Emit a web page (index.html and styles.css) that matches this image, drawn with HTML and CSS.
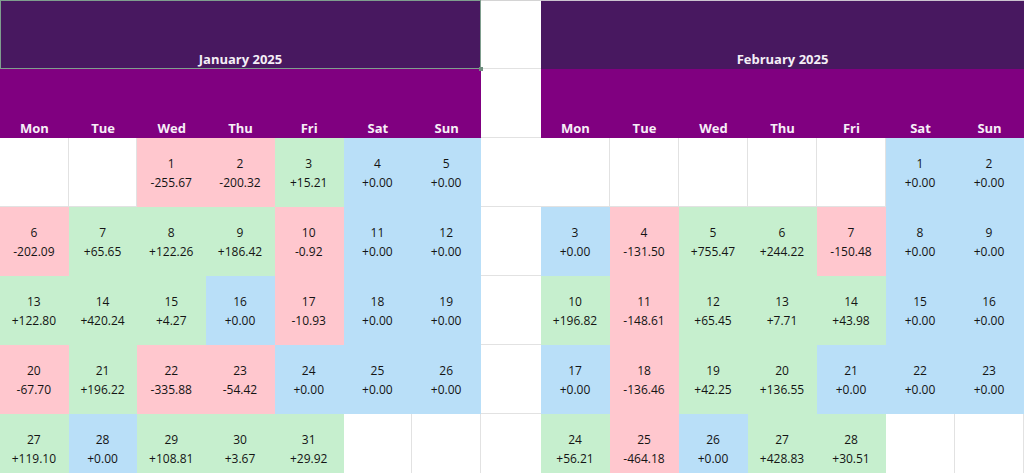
FILE: index.html
```html
<!DOCTYPE html>
<html lang="en">
<head>
<meta charset="utf-8">
<title>Calendar 2025</title>
<link rel="stylesheet" href="styles.css">
</head>
<body>
<div class="sheet">
  <section class="month month-jan">
    <div class="title selected">January 2025</div>
    <div class="dow">Mon</div><div class="dow">Tue</div><div class="dow">Wed</div><div class="dow">Thu</div><div class="dow">Fri</div><div class="dow">Sat</div><div class="dow">Sun</div>

    <div class="day"></div>
    <div class="day"></div>
    <div class="day loss"><span>1</span><span>-255.67</span></div>
    <div class="day loss"><span>2</span><span>-200.32</span></div>
    <div class="day gain"><span>3</span><span>+15.21</span></div>
    <div class="day flat"><span>4</span><span>+0.00</span></div>
    <div class="day flat"><span>5</span><span>+0.00</span></div>

    <div class="day loss"><span>6</span><span>-202.09</span></div>
    <div class="day gain"><span>7</span><span>+65.65</span></div>
    <div class="day gain"><span>8</span><span>+122.26</span></div>
    <div class="day gain"><span>9</span><span>+186.42</span></div>
    <div class="day loss"><span>10</span><span>-0.92</span></div>
    <div class="day flat"><span>11</span><span>+0.00</span></div>
    <div class="day flat"><span>12</span><span>+0.00</span></div>

    <div class="day gain"><span>13</span><span>+122.80</span></div>
    <div class="day gain"><span>14</span><span>+420.24</span></div>
    <div class="day gain"><span>15</span><span>+4.27</span></div>
    <div class="day flat"><span>16</span><span>+0.00</span></div>
    <div class="day loss"><span>17</span><span>-10.93</span></div>
    <div class="day flat"><span>18</span><span>+0.00</span></div>
    <div class="day flat"><span>19</span><span>+0.00</span></div>

    <div class="day loss"><span>20</span><span>-67.70</span></div>
    <div class="day gain"><span>21</span><span>+196.22</span></div>
    <div class="day loss"><span>22</span><span>-335.88</span></div>
    <div class="day loss"><span>23</span><span>-54.42</span></div>
    <div class="day flat"><span>24</span><span>+0.00</span></div>
    <div class="day flat"><span>25</span><span>+0.00</span></div>
    <div class="day flat"><span>26</span><span>+0.00</span></div>

    <div class="day gain"><span>27</span><span>+119.10</span></div>
    <div class="day flat"><span>28</span><span>+0.00</span></div>
    <div class="day gain"><span>29</span><span>+108.81</span></div>
    <div class="day gain"><span>30</span><span>+3.67</span></div>
    <div class="day gain"><span>31</span><span>+29.92</span></div>
    <div class="day"></div>
    <div class="day"></div>
  </section>

  <div class="spacer">
    <div class="blank"></div><div class="blank"></div><div class="blank"></div><div class="blank"></div><div class="blank"></div><div class="blank"></div><div class="blank"></div>
  </div>

  <section class="month month-feb">
    <div class="title">February 2025</div>
    <div class="dow">Mon</div><div class="dow">Tue</div><div class="dow">Wed</div><div class="dow">Thu</div><div class="dow">Fri</div><div class="dow">Sat</div><div class="dow">Sun</div>

    <div class="day"></div>
    <div class="day"></div>
    <div class="day"></div>
    <div class="day"></div>
    <div class="day"></div>
    <div class="day flat"><span>1</span><span>+0.00</span></div>
    <div class="day flat"><span>2</span><span>+0.00</span></div>

    <div class="day flat"><span>3</span><span>+0.00</span></div>
    <div class="day loss"><span>4</span><span>-131.50</span></div>
    <div class="day gain"><span>5</span><span>+755.47</span></div>
    <div class="day gain"><span>6</span><span>+244.22</span></div>
    <div class="day loss"><span>7</span><span>-150.48</span></div>
    <div class="day flat"><span>8</span><span>+0.00</span></div>
    <div class="day flat"><span>9</span><span>+0.00</span></div>

    <div class="day gain"><span>10</span><span>+196.82</span></div>
    <div class="day loss"><span>11</span><span>-148.61</span></div>
    <div class="day gain"><span>12</span><span>+65.45</span></div>
    <div class="day gain"><span>13</span><span>+7.71</span></div>
    <div class="day gain"><span>14</span><span>+43.98</span></div>
    <div class="day flat"><span>15</span><span>+0.00</span></div>
    <div class="day flat"><span>16</span><span>+0.00</span></div>

    <div class="day flat"><span>17</span><span>+0.00</span></div>
    <div class="day loss"><span>18</span><span>-136.46</span></div>
    <div class="day gain"><span>19</span><span>+42.25</span></div>
    <div class="day gain"><span>20</span><span>+136.55</span></div>
    <div class="day flat"><span>21</span><span>+0.00</span></div>
    <div class="day flat"><span>22</span><span>+0.00</span></div>
    <div class="day flat"><span>23</span><span>+0.00</span></div>

    <div class="day gain"><span>24</span><span>+56.21</span></div>
    <div class="day loss"><span>25</span><span>-464.18</span></div>
    <div class="day flat"><span>26</span><span>+0.00</span></div>
    <div class="day gain"><span>27</span><span>+428.83</span></div>
    <div class="day gain"><span>28</span><span>+30.51</span></div>
    <div class="day"></div>
    <div class="day"></div>
  </section>
</div>
</body>
</html>
```

FILE: styles.css
```css
* { box-sizing: border-box; }

html, body {
  margin: 0;
  padding: 0;
  background: #ffffff;
  overflow: hidden;
}

body {
  font-family: "Open Sans", "Noto Sans", sans-serif;
  font-size: 12px;
  color: #141414;
}

.sheet {
  display: flex;
  width: 1024px;
  height: 473px;
  overflow: hidden;
}

.month {
  display: grid;
  grid-template-columns: repeat(7, 1fr);
  grid-auto-rows: 69px;
  flex: none;
}

.month-jan { width: 481px; }
.month-feb { width: 483px; }

.spacer {
  width: 60px;
  flex: none;
  display: grid;
  grid-auto-rows: 69px;
}

.blank {
  border-bottom: 1px solid #e2e2e2;
}
.blank:first-child {
  box-shadow: inset 0 1px 0 #d4d4d4;
}

.title {
  grid-column: 1 / -1;
  background: #481860;
  color: #f4eff6;
  font-weight: 700;
  font-size: 13px;
  line-height: 13px;
  display: flex;
  align-items: flex-end;
  justify-content: center;
  padding-bottom: 3px;
  box-shadow: inset 0 1px 0 #cbc3cf;
}

.title.selected {
  position: relative;
  box-shadow: inset 0 0 0 1px #7f9e8e;
}

.title.selected::after {
  content: "";
  position: absolute;
  right: -2px;
  bottom: -2px;
  width: 4px;
  height: 4px;
  background: #6f8f7f;
}

.dow {
  background: #800080;
  color: #f7eef7;
  font-weight: 700;
  font-size: 13px;
  line-height: 13px;
  display: flex;
  align-items: flex-end;
  justify-content: center;
  padding-bottom: 3px;
}

.day {
  display: flex;
  flex-direction: column;
  align-items: center;
  justify-content: center;
  line-height: 19px;
  border-right: 1px solid #e2e2e2;
  border-bottom: 1px solid #e2e2e2;
  padding-top: 1px;
}

.loss { background: #ffc7ce; border-color: #ffc7ce; }
.gain { background: #c6efce; border-color: #c6efce; }
.flat { background: #b9dff8; border-color: #b9dff8; }
```
